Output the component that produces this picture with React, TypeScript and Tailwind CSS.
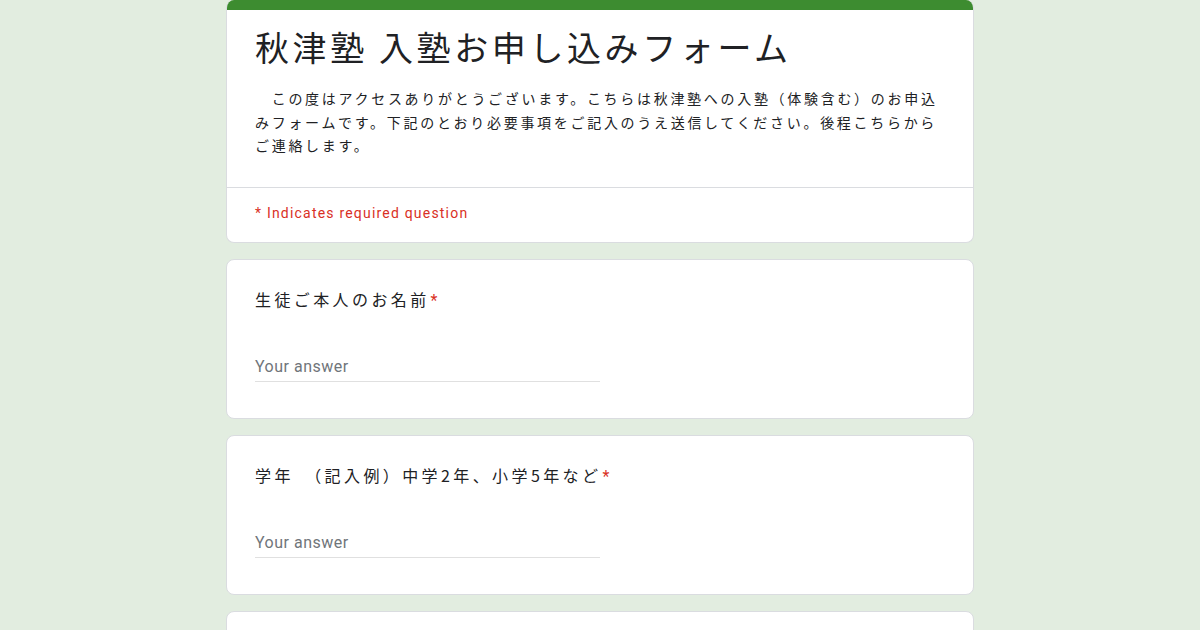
const JP = "font-['Noto_Sans_CJK_JP',sans-serif]"

const QUESTIONS = [
  { id: 'name', label: '生徒ご本人のお名前' },
  { id: 'grade', label: '学年　（記入例）中学2年、小学5年など' },
  { id: 'school', label: '学校名' },
]

const DESCRIPTION =
  '\u3000この度はアクセスありがとうございます。こちらは秋津塾への入塾（体験含む）のお申込みフォームです。下記のとおり必要事項をご記入のうえ送信してください。後程こちらからご連絡します。'

function QuestionCard({ label }: { label: string }) {
  return (
    <div className="rounded-lg border border-[#dadce0] bg-white px-7 pt-[27px] pb-[36px]">
      <div className={`${JP} text-[16px] leading-6 tracking-[3.4px] text-[#202124]`}>
        {label}
        <span className="ml-[1px] font-['Roboto',sans-serif] text-[#d93025]">*</span>
      </div>
      <div className="mt-[41px] w-[345px] border-b border-[#e0e0e0] pb-[2px]">
        <span className="font-['Roboto',sans-serif] text-[16px] leading-6 tracking-[0.5px] text-[#70757a]">
          Your answer
        </span>
      </div>
    </div>
  )
}

export default function App() {
  return (
    <div className="min-h-screen bg-[#e2ede0]">
      <div className="mx-auto flex w-[748px] flex-col gap-4">
        <div className="overflow-hidden rounded-lg border border-t-0 border-[#dadce0] bg-white">
          <div className="h-[10px] bg-[#3d8c30]" />
          <div className="border-b border-[#dadce0] px-7 pt-[17px] pb-[29px]">
            <h1 className={`${JP} text-[34px] leading-10 tracking-[3.6px] text-[#202124]`}>
              秋津塾 入塾お申し込みフォーム
            </h1>
            <p className={`${JP} mt-[20px] text-[14px] leading-[23.5px] tracking-[2.7px] text-[#202124]`}>
              {DESCRIPTION}
            </p>
          </div>
          <div className="px-7 pt-[15px] pb-[19px] font-['Roboto',sans-serif] text-[14px] leading-5 tracking-[1.2px] text-[#d93025]">
            * Indicates required question
          </div>
        </div>
        {QUESTIONS.map((q) => (
          <QuestionCard key={q.id} label={q.label} />
        ))}
      </div>
    </div>
  )
}
